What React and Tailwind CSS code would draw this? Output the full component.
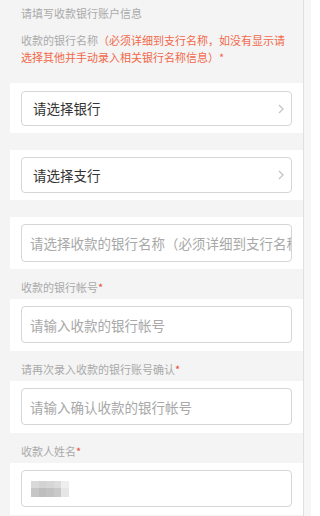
import React from "react";

const FONT = "font-['Noto_Sans_CJK_SC','Noto_Sans',sans-serif]";

function Chevron() {
  return (
    <svg width="6" height="10" viewBox="0 0 6 10" className="shrink-0">
      <polyline points="1,1 5,5 1,9" fill="none" stroke="#c4c4c4" strokeWidth="1.3" />
    </svg>
  );
}

function SelectRow({ text, h = "h-[36px]", pad = "pt-[7px] pb-[7px]" }) {
  return (
    <div className={`bg-white px-[11px] ${pad}`}>
      <div className={`${h} flex items-center justify-between rounded-[4px] border border-[#d6d6d6] pl-[11px] pr-[7px]`}>
        <span className="text-[13.5px] text-[#333]">{text}</span>
        <Chevron />
      </div>
    </div>
  );
}

function InputRow({ placeholder, children }) {
  return (
    <div className="bg-white px-[11px] pt-[7px] pb-[8px]">
      {children ? (
        <div className="h-[37px] flex items-center rounded-[4px] border border-[#d6d6d6] pl-[9px]">{children}</div>
      ) : (
        <input
          readOnly
          placeholder={placeholder}
          className="block h-[37px] w-full rounded-[4px] border border-[#d6d6d6] bg-white pl-[8px] text-[13.5px] text-[#333] outline-none placeholder:text-[#a8a8a8]"
        />
      )}
    </div>
  );
}

function Label({ text }) {
  return (
    <div className="h-[30px] px-[11px] pt-[10px] text-[11px] leading-[17px] text-[#aaa]">
      {text}
      <span className="text-[#e94b3c]">*</span>
    </div>
  );
}

function Blurred() {
  const top = ["#d9d9d9", "#d2d2d2", "#d6d6d6", "#dcdcdc", "#eeeeee"];
  const bottom = ["#c6c6c6", "#bdbdbd", "#c2c2c2", "#c9c9c9", "#e6e6e6"];
  return (
    <div className="grid grid-cols-5 w-[38px]">
      {top.map((c, i) => (
        <div key={"t" + i} className="h-[7px]" style={{ background: c }} />
      ))}
      {bottom.map((c, i) => (
        <div key={"b" + i} className="h-[9px]" style={{ background: c }} />
      ))}
    </div>
  );
}

export default function App() {
  return (
    <div className={`flex w-[311px] min-h-[516px] bg-[#f4f4f4] ${FONT}`}>
      <div className="w-[10px] shrink-0" />
      <div className="w-[293px] shrink-0 flex flex-col">
        <div className="h-[83px] px-[11px] pt-[5px]">
          <p className="text-[11px] leading-[17px] text-[#aaa]">请填写收款银行账户信息</p>
          <p className="mt-[10px] text-[11px] leading-[17px] text-[#aaa]">
            收款的银行名称
            <span className="text-[#f0694a]">（必须详细到支行名称，如没有显示请选择其他并手动录入相关银行名称信息）*</span>
          </p>
        </div>
        <SelectRow text="请选择银行" h="h-[35px]" pad="pt-[8px] pb-[7px]" />
        <div className="h-[17px]" />
        <SelectRow text="请选择支行" />
        <div className="h-[17px]" />
        <div className="bg-white px-[11px] pt-[7px] pb-[7px]">
          <input
            readOnly
            placeholder="请选择收款的银行名称（必须详细到支行名称，如没有显示请选择其他并手动录入相关银行名称信息）"
            className="block h-[38px] w-full rounded-[4px] border border-[#d6d6d6] bg-white pl-[8px] text-[13.5px] outline-none placeholder:text-[#a8a8a8]"
          />
        </div>
        <Label text="收款的银行帐号" />
        <InputRow placeholder="请输入收款的银行帐号" />
        <Label text="请再次录入收款的银行账号确认" />
        <InputRow placeholder="请输入确认收款的银行帐号" />
        <Label text="收款人姓名" />
        <InputRow>
          <Blurred />
        </InputRow>
      </div>
      <div className="w-[8px] shrink-0 border-l border-[#e0e0e0] bg-[#f6f6f6]" />
    </div>
  );
}
